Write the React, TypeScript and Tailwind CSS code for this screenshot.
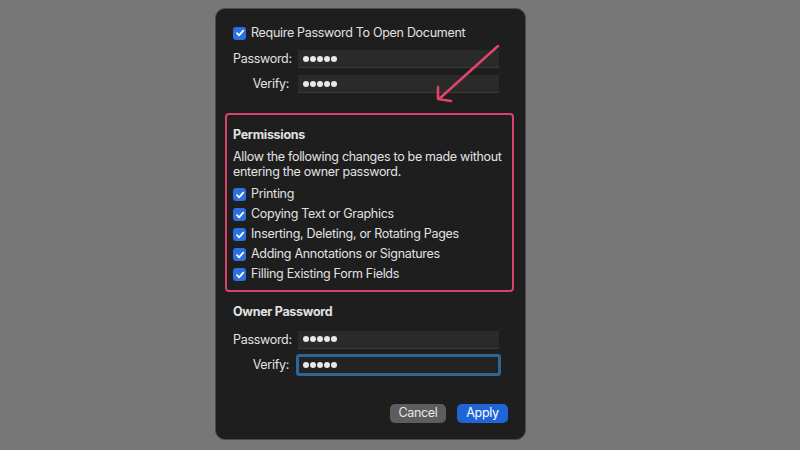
import React from "react";

const Check = () => (
  <div className="w-[13px] h-[13px] rounded-[3px] bg-[#2b6fe0] flex items-center justify-center shrink-0">
    <svg width="10" height="10" viewBox="0 0 10 10" fill="none">
      <path d="M2 5.2 L4.1 7.3 L8.2 2.6" stroke="white" strokeWidth="1.8" strokeLinecap="round" strokeLinejoin="round" />
    </svg>
  </div>
);

const Dots = () => (
  <div className="flex gap-px">
    {[0, 1, 2, 3, 4].map((i) => (
      <div key={i} className="w-[6px] h-[6px] rounded-full bg-[#e8e8e8]" />
    ))}
  </div>
);

const CheckRow = ({ label }: { label: string }) => (
  <div className="h-[20px] flex items-center gap-[5px] whitespace-nowrap">
    <Check />
    <span>{label}</span>
  </div>
);

const Field = ({ label, focused }: { label: string; focused?: boolean }) => (
  <div className="flex items-center gap-[9px]">
    <span className="w-[56px] text-right">{label}</span>
    {focused ? (
      <div className="w-[205px] h-[22px] -ml-[2px] border-[3px] border-[#2d6594] rounded-[3px] bg-[#232323] flex items-center pl-[4px]">
        <Dots />
      </div>
    ) : (
      <div className="w-[201px] h-[18px] bg-[#2a2a2a] border-b border-[#3a3a3a] flex items-center pl-[5px]">
        <Dots />
      </div>
    )}
  </div>
);

export default function App() {
  return (
    <div
      className="w-[800px] h-[450px] bg-[#777777] overflow-hidden relative"
      style={{ fontFamily: "Inter, 'Liberation Sans', sans-serif" }}
    >
      <div className="ml-[215px] mt-[8px] w-[311px] h-[432px] bg-[#1e1e1e] border border-[#4a4a4a] rounded-[10px] text-[12.5px] tracking-[-0.3px] text-[#e2e2e2] flex flex-col">
        <div className="pl-[17px] pt-[14px]">
          <CheckRow label="Require Password To Open Document" />
          <div className="flex flex-col gap-[6px] mt-[7px]">
            <Field label="Password:" />
            <Field label="Verify:" />
          </div>
        </div>

        <div className="mt-[19px] ml-[9px] w-[289px] h-[179px] border-2 border-[#d9436a] rounded-[4px] px-[6px] pt-[13px]">
          <div className="font-bold h-[16px] flex items-center">Permissions</div>
          <div className="mt-[5px] leading-[15px] whitespace-nowrap">
            Allow the following changes to be made without
            <br />
            entering the owner password.
          </div>
          <div className="mt-[6px]">
            <CheckRow label="Printing" />
            <CheckRow label="Copying Text or Graphics" />
            <CheckRow label="Inserting, Deleting, or Rotating Pages" />
            <CheckRow label="Adding Annotations or Signatures" />
            <CheckRow label="Filling Existing Form Fields" />
          </div>
        </div>

        <div className="pl-[17px] mt-[13px]">
          <div className="font-bold h-[16px] flex items-center">Owner Password</div>
          <div className="flex flex-col gap-[5px] mt-[10px]">
            <Field label="Password:" />
            <Field label="Verify:" focused />
          </div>
        </div>

        <div className="flex justify-end gap-[11px] pr-[17px] mt-[28px]">
          <button className="w-[56px] h-[19px] rounded-[5px] bg-[#5d5d5d] text-[#e8e8e8]">Cancel</button>
          <button className="w-[51px] h-[19px] rounded-[5px] bg-[#1f64d8] text-white">Apply</button>
        </div>
      </div>

      <svg className="absolute left-0 top-0" width="800" height="450" viewBox="0 0 800 450" fill="none">
        <path d="M498 46 L439 99 M438 87 L438 99 L451 101" stroke="#e0446c" strokeWidth="2.5" strokeLinecap="round" strokeLinejoin="round" />
      </svg>
    </div>
  );
}
